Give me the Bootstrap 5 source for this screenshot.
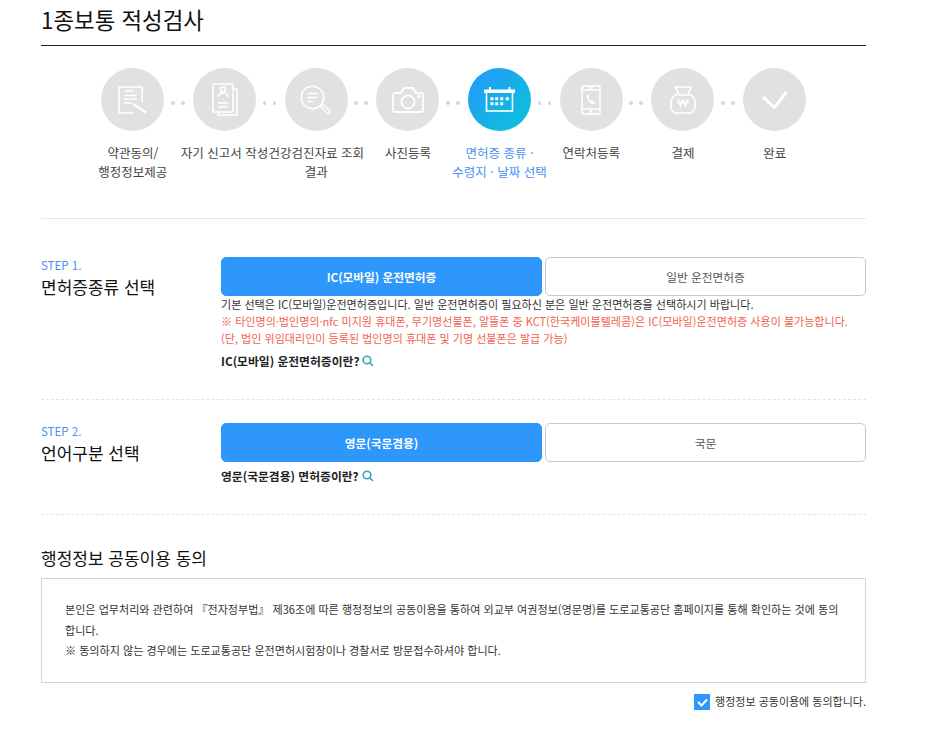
<!DOCTYPE html>
<html lang="ko">
<head>
<meta charset="utf-8">
<title>1종보통 적성검사</title>
<link href="https://cdn.jsdelivr.net/npm/bootstrap@5.3.0/dist/css/bootstrap.min.css" rel="stylesheet">
<style>
html,body{height:745px;overflow:hidden;background:#fff}
body{font-family:"Noto Sans CJK KR","Noto Sans",sans-serif;color:#333;font-size:12px}
.page-wrap{width:825px;margin-left:41px}
.page-title{font-size:22.400px;line-height:36px;height:46px;padding-top:1px;margin:0;font-weight:400;color:#111;border-bottom:1px solid #222}
.steps{margin:22px 0 0 46px;width:733.6px;height:150px}
.step-item{width:91.7px;flex:none;position:relative}
.step-circle{width:63px;height:63px;border-radius:50%;background:#e1e1e1;margin:0 auto;display:flex;align-items:center;justify-content:center}
.step-on .step-circle{background:linear-gradient(135deg,#2397fb,#0cc5d6)}
.step-dots{position:absolute;left:84px;top:33px;width:13.500px;height:3.500px;display:flex;justify-content:space-between}
.step-dots i{width:3.500px;height:3.500px;border-radius:50%;background:#d8d8d8;display:block}
.step-label{margin-top:12px;font-size:12.500px;line-height:19px;text-align:center;white-space:nowrap;color:#444;display:flex;flex-direction:column;align-items:center}
.step-on .step-label{color:#4a90f0}
.rule-solid{height:1px;background:#e8e8e8}
.rule-dash{border-top:1px dashed #e3e3e3}
.sec-one{padding-top:38px;height:180px}
.sec-two{padding-top:23px;height:114px}
.sec-left{width:180px;flex:none}
.step-no{color:#4a90e8;font-size:11.500px;line-height:14px;margin-top:1px}
.sec-title{font-size:17px;line-height:24px;color:#111;margin:3px 0 0;font-weight:400}
.choice-row{gap:3px}
.choice{height:39px;flex:1 1 0;font-size:11.700px;padding:0;border-radius:5px;display:flex;align-items:center;justify-content:center}
.choice-on{background:#2d97fb;color:#fff;font-weight:700;border:1px solid #2d97fb}
.choice-off{background:#fff;color:#555;border:1px solid #c9c9c9}
.choice-on:hover{background:#2d97fb;color:#fff}
.note{font-size:11.050px;line-height:17px;color:#333;margin:0}
.note-red{color:#f3624f}
.more{font-size:11.800px;font-weight:700;color:#222;line-height:18px;display:flex;align-items:center;gap:3px}
.more-a{margin-top:5px}
.more-b{margin-top:5px}
.consent-title{font-size:17px;line-height:24px;font-weight:400;color:#111;margin:31px 0 0}
.consent-box{height:105px;margin-top:8px;border:1px solid #d4d4d4;padding:20px 23px 0;font-size:11.070px;color:#333}
.consent-box p{margin:0;line-height:19px}
.consent-box p.first-p{line-height:21px}
.agree{margin-top:10px;height:18px;font-size:11px;color:#333;gap:5px}
.agree-text{margin-bottom:2px}
.agree-box{width:16px;height:16px;background:#2d97fb;display:flex;align-items:center;justify-content:center}
.next-title{font-size:17px;line-height:24px;margin:31px 0 0;font-weight:400;color:#111}
</style>
</head>
<body>
<div class="page-wrap">
<h1 class="page-title">1종보통 적성검사</h1>

<div class="steps d-flex">
  <div class="step-item">
    <div class="step-circle"><svg width="30" height="28" viewBox="0 0 30 28" fill="none" stroke="#fff" stroke-width="1.500"><path d="M24 16V1H1v26h14"/><path d="M7.500 5h8M6 9.500h13M6 13h13M6 17h8"/><path d="M15 18l13 8.500" stroke-width="2.600"/></svg></div>
    <div class="step-dots"><i></i><i></i></div>
    <div class="step-label"><span>약관동의/</span><span>행정정보제공</span></div>
  </div>
  <div class="step-item">
    <div class="step-circle"><svg width="26" height="33" viewBox="0 0 26 33" fill="none" stroke="#fff" stroke-width="1.500"><rect x="1" y="1" width="20" height="28" rx="1"/><path d="M21 6h4v26H6v-3"/><circle cx="11" cy="6.500" r="2.500"/><path d="M6 14c.5-3 2.500-4 5-4s4.500 1 5 4M6 20h10M6 24h10"/></svg></div>
    <div class="step-dots"><i></i><i></i></div>
    <div class="step-label"><span>자기 신고서 작성</span></div>
  </div>
  <div class="step-item">
    <div class="step-circle"><svg width="32" height="30" viewBox="0 0 32 30" fill="none" stroke="#fff" stroke-width="1.500"><circle cx="12.500" cy="12.500" r="11.200"/><path d="M7.500 8.500h10M7.500 12.500h10M7.500 16.500h6"/><path d="M20.500 21l2-2 7 6.500c1.500 1.500-1 4-2.500 2.500z"/></svg></div>
    <div class="step-dots"><i></i><i></i></div>
    <div class="step-label"><span>건강검진자료 조회</span><span>결과</span></div>
  </div>
  <div class="step-item">
    <div class="step-circle"><svg width="32" height="26" viewBox="0 0 32 26" fill="none" stroke="#fff" stroke-width="1.800"><path d="M3 6h6l3-5h9l3 5h5c1 0 2 1 2 2v15c0 1-1 2-2 2H3c-1 0-2-1-2-2V8c0-1 1-2 2-2z"/><circle cx="16" cy="15" r="6.500"/><circle cx="27" cy="9.500" r=".8" fill="#fff"/></svg></div>
    <div class="step-dots"><i></i><i></i></div>
    <div class="step-label"><span>사진등록</span></div>
  </div>
  <div class="step-item step-on">
    <div class="step-circle"><svg width="31" height="25" viewBox="0 0 31 25" fill="none" stroke="#fff"><rect x="2.500" y="5" width="26" height="19" stroke-width="1.600"/><path d="M0 2.500h31V6H0z" fill="#fff" stroke="none"/><path d="M6 0v3M25.500 0v3" stroke-width="2"/><path d="M6.500 11.800h3M11.200 11.800h3M16.200 11.800h3M21.800 11.800h3M6.500 16.800h3M11.200 16.800h3M16.200 16.800h3" stroke-width="3"/></svg></div>
    <div class="step-dots"><i></i><i></i></div>
    <div class="step-label"><span>면허증 종류 ·</span><span>수령지 · 날짜 선택</span></div>
  </div>
  <div class="step-item">
    <div class="step-circle"><svg width="20" height="30" viewBox="0 0 20 30" fill="none" stroke="#fff" stroke-width="1.500"><rect x="1" y="1" width="18" height="28" rx="1"/><path d="M1 5h18M1 24h18M8 3h4"/><path d="M7 9.500c-1.500 1-1.500 3 0 5.500s4 4.500 6 4l1-1.500-3-2.500-1.300 1c-1-.7-2-2.500-2.200-3.800l1.200-.8-.8-3z" fill="#fff" stroke="none"/><circle cx="10" cy="26.500" r=".7" fill="#fff"/></svg></div>
    <div class="step-dots"><i></i><i></i></div>
    <div class="step-label"><span>연락처등록</span></div>
  </div>
  <div class="step-item">
    <div class="step-circle"><svg width="26" height="28" viewBox="0 0 26 28" fill="none" stroke="#fff" stroke-width="1.700"><path d="M5.700 1H21l-3.300 8H9z"/><path d="M8.500 8C3 9 1 12 1 17v3c0 5 3 7 6 7h12c3 0 6-2 6-7v-3c0-5-2-8-7.500-9"/><path d="M8 13l2.500 7 2.500-6 2.500 6L18 13M7 16.500h12" stroke-width="1.500"/></svg></div>
    <div class="step-dots"><i></i><i></i></div>
    <div class="step-label"><span>결제</span></div>
  </div>
  <div class="step-item">
    <div class="step-circle"><svg width="26" height="18" viewBox="0 0 26 18" fill="none" stroke="#fff" stroke-width="3"><path d="M1 6l11.500 10.500L24.500 1"/></svg></div>
    <div class="step-label"><span>완료</span></div>
  </div>
</div>

<div class="rule-solid"></div>

<section class="sec-one d-flex">
  <div class="sec-left">
    <div class="step-no">STEP 1.</div>
    <h2 class="sec-title">면허증종류 선택</h2>
  </div>
  <div class="flex-grow-1">
    <div class="d-flex choice-row">
      <button type="button" class="btn choice choice-on">IC(모바일) 운전면허증</button>
      <button type="button" class="btn choice choice-off">일반 운전면허증</button>
    </div>
    <p class="note">기본 선택은 IC(모바일)운전면허증입니다. 일반 운전면허증이 필요하신 분은 일반 운전면허증을 선택하시기 바랍니다.</p>
    <p class="note note-red">※ 타인명의·법인명의·nfc 미지원 휴대폰, 무기명선불폰, 알뜰폰 중 KCT(한국케이블텔레콤)은 IC(모바일)운전면허증 사용이 불가능합니다.</p>
    <p class="note note-red">(단, 법인 위임대리인이 등록된 법인명의 휴대폰 및 기명 선불폰은 발급 가능)</p>
    <div class="more more-a">IC(모바일) 운전면허증이란? <svg width="12" height="12" viewBox="0 0 12 12" fill="none" stroke="#36a3b5" stroke-width="1.600"><circle cx="5" cy="5" r="3.800"/><path d="M8 8l3 3"/></svg></div>
  </div>
</section>

<div class="rule-dash"></div>

<section class="sec-two d-flex">
  <div class="sec-left">
    <div class="step-no">STEP 2.</div>
    <h2 class="sec-title">언어구분 선택</h2>
  </div>
  <div class="flex-grow-1">
    <div class="d-flex choice-row">
      <button type="button" class="btn choice choice-on">영문(국문겸용)</button>
      <button type="button" class="btn choice choice-off">국문</button>
    </div>
    <div class="more more-b">영문(국문겸용) 면허증이란? <svg width="12" height="12" viewBox="0 0 12 12" fill="none" stroke="#36a3b5" stroke-width="1.600"><circle cx="5" cy="5" r="3.800"/><path d="M8 8l3 3"/></svg></div>
  </div>
</section>

<div class="rule-dash"></div>

<h2 class="consent-title">행정정보 공동이용 동의</h2>
<div class="consent-box">
  <p class="first-p">본인은 업무처리와 관련하여 『전자정부법』 제36조에 따른 행정정보의 공동이용을 통하여 외교부 여권정보(영문명)를 도로교통공단 홈페이지를 통해 확인하는 것에 동의합니다.</p>
  <p>※ 동의하지 않는 경우에는 도로교통공단 운전면허시험장이나 경찰서로 방문접수하셔야 합니다.</p>
</div>
<div class="agree d-flex justify-content-end align-items-center">
  <span class="agree-box"><svg width="11" height="9" viewBox="0 0 11 9" fill="none" stroke="#fff" stroke-width="2"><path d="M1 4l3.500 3.500L10 1.500"/></svg></span>
  <span class="agree-text">행정정보 공동이용에 동의합니다.</span>
</div>
<h2 class="next-title">수령지 선택</h2>
</div>
</body>
</html>
